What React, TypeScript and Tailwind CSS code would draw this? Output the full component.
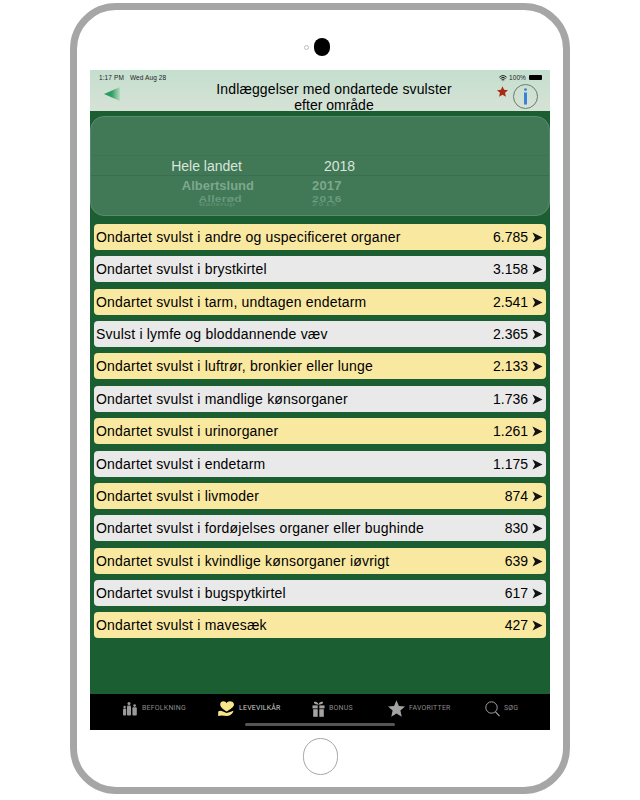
import { Wifi } from "lucide-react";

const rows = [
  ["Ondartet svulst i andre og uspecificeret organer", "6.785"],
  ["Ondartet svulst i brystkirtel", "3.158"],
  ["Ondartet svulst i tarm, undtagen endetarm", "2.541"],
  ["Svulst i lymfe og bloddannende væv", "2.365"],
  ["Ondartet svulst i luftrør, bronkier eller lunge", "2.133"],
  ["Ondartet svulst i mandlige kønsorganer", "1.736"],
  ["Ondartet svulst i urinorganer", "1.261"],
  ["Ondartet svulst i endetarm", "1.175"],
  ["Ondartet svulst i livmoder", "874"],
  ["Ondartet svulst i fordøjelses organer eller bughinde", "830"],
  ["Ondartet svulst i kvindlige kønsorganer iøvrigt", "639"],
  ["Ondartet svulst i bugspytkirtel", "617"],
  ["Ondartet svulst i mavesæk", "427"],
];

function Arrow() {
  return (
    <svg width="11" height="11" viewBox="0 0 11 11" className="shrink-0">
      <path d="M0.5 0.5 L10.5 5.5 L0.5 10.5 L3 5.5 Z" fill="#111" />
    </svg>
  );
}

function PeopleIcon() {
  return (
    <svg width="16" height="14" viewBox="0 0 16 14" fill="#9a9a9a">
      <circle cx="2.6" cy="5" r="1.2" />
      <rect x="1" y="6.5" width="3.2" height="7" rx="1" />
      <circle cx="7" cy="1.6" r="1.5" />
      <rect x="5" y="3.4" width="4" height="10" rx="1" />
      <circle cx="12.6" cy="3.6" r="1.3" />
      <rect x="10.4" y="5.2" width="4.4" height="8.4" rx="1" />
    </svg>
  );
}

function HeartHandIcon() {
  return (
    <svg width="17" height="16" viewBox="0 0 17 16" fill="#f7e68c">
      <path d="M8.6 10.5 C5 8 2.2 6 2.2 3.4 C2.2 1.4 3.8 0.3 5.4 0.3 C6.8 0.3 8 1 8.6 2.2 C9.3 1 10.5 0.3 11.9 0.3 C13.7 0.3 16 1.4 16 3.4 C16 6 12.4 8 8.6 10.5 Z" />
      <path d="M0.2 10.5 C1.8 9.5 3.4 9.6 5 10.6 L8.5 12 L12 11 L15.5 9.8 C14.8 12.5 12.5 15 9 15 L3.5 14.6 L0.2 15 Z" />
    </svg>
  );
}

function GiftIcon() {
  return (
    <svg width="13" height="16" viewBox="0 0 13 16" fill="#a3a3a3">
      <path d="M2 1 C4 0 6 1.5 6.3 3 L6.7 3 C7 1.5 9 0 11 1 C11.6 2.4 9.5 3.4 7.8 3.6 L5.2 3.6 C3.5 3.4 1.4 2.4 2 1 Z" />
      <rect x="0.5" y="4.4" width="5.2" height="3" />
      <rect x="7.3" y="4.4" width="5.2" height="3" />
      <rect x="1.2" y="8.2" width="4.5" height="7.6" />
      <rect x="7.3" y="8.2" width="4.5" height="7.6" />
    </svg>
  );
}

function StarIcon({ size, color }: { size: number; color: string }) {
  return (
    <svg width={size} height={size} viewBox="0 0 24 24" fill={color}>
      <path d="M12 0.5 L15.4 8.4 L24 9.2 L17.5 14.9 L19.4 23.5 L12 19 L4.6 23.5 L6.5 14.9 L0 9.2 L8.6 8.4 Z" />
    </svg>
  );
}

function SearchIcon() {
  return (
    <svg width="15" height="16" viewBox="0 0 15 16" fill="none" stroke="#a3a3a3" strokeWidth="1">
      <circle cx="6.5" cy="6.5" r="5.7" />
      <path d="M10.5 10.8 L14.5 15.2" strokeWidth="1.2" />
    </svg>
  );
}

function TabItem({ icon, label, active, w }: { icon: React.ReactNode; label: string; active?: boolean; w: string }) {
  return (
    <div className={`flex items-center gap-[4px] ${w}`}>
      {icon}
      <span className={`font-['Roboto',sans-serif] text-[7px] tracking-[0.2px] ${active ? "text-[#cfcfcf]" : "text-[#8a8a8a]"}`}>{label}</span>
    </div>
  );
}

export default function App() {
  return (
    <div className="h-[800px] w-[640px] overflow-hidden bg-white pl-[70px] pt-[3px] font-['Liberation_Sans',sans-serif]">
      <div className="flex h-[791px] w-[500px] flex-col items-center rounded-[46px] border-[7px] border-[#a6a6a6] bg-white">
        {/* camera */}
        <div className="flex h-[60px] w-full items-center justify-center gap-[5px] pr-[6px] pt-[14px]">
          <div className="h-[5px] w-[5px] rounded-full border border-[#bdbdbd]" />
          <div className="h-[18px] w-[16px] rounded-full bg-black" />
        </div>

        {/* screen */}
        <div className="flex h-[660px] w-[460px] flex-col bg-[#1a5e32]">
          <div className="relative h-[41px] shrink-0 bg-gradient-to-b from-[#c4dfcf] to-[#d6e2d6]">
            <div className="flex items-center justify-between pl-[9px] pr-[8px] pt-[3px] text-[6.5px] tracking-[0.1px] text-[#222]">
              <span className="flex gap-[6px]">
                <span>1:17 PM</span>
                <span>Wed Aug 28</span>
              </span>
              <span className="flex items-center gap-[2px]">
                <Wifi size={8} strokeWidth={3} />
                <span>100%</span>
                <span className="ml-[1px] block h-[5px] w-[13px] rounded-[1px] bg-black" />
              </span>
            </div>
            <div className="absolute left-[14px] top-[17px] h-[14px] w-[16px] bg-gradient-to-r from-[#249a5c] via-[#2f9f65] to-[#b4dcc2] [clip-path:polygon(0_50%,100%_0,100%_100%)]" />
            <div className="absolute left-[28px] right-0 top-[11px] text-center text-[14px] leading-[16px] text-black">
              <div className="tracking-[0.12px]">Indlæggelser med ondartede svulster</div>
              <div>efter område</div>
            </div>
            <div className="absolute left-[407px] top-[16px]">
              <StarIcon size={11} color="#a92a10" />
            </div>
            <div className="absolute left-[423px] top-[14px] flex h-[25px] w-[25px] items-center justify-center rounded-full border border-[#6b7a72]">
              <svg width="5" height="17" viewBox="0 0 5 17" fill="#3b82d6">
                <circle cx="2.5" cy="1.6" r="1.4" />
                <rect x="1" y="4.5" width="3" height="12" />
              </svg>
            </div>
          </div>

          <div className="flex-1 overflow-hidden px-[4px] pt-[5px]">
            {/* picker */}
            <div className="relative -mx-[4px] h-[100px] overflow-hidden rounded-[14px] border border-[#5c8a70] bg-[#417856]">
              <div className="absolute left-0 right-0 top-[38px] h-[21px] border-y border-b-[#3a6e4e] border-t-[#3e7452]" />
              <div className="relative flex pt-[41px] font-medium">
                <div className="flex w-[232px] flex-col items-end">
                  <div className="pr-[81px] text-[14px] leading-[17px] text-[#d9e5dd]">Hele landet</div>
                  <div className="pr-[69px] pt-[2px] text-[13px] font-bold leading-[17px] text-[#7fa78e]">Albertslund</div>
                  <div className="origin-top scale-y-75 pr-[81px] text-[12px] font-bold leading-[13px] tracking-[0.3px] text-[#6a9a7e]">Allerød</div>
                  <div className="-mt-[5px] origin-top scale-y-50 pr-[88px] text-[9px] font-bold leading-[10px] text-[#5a8e70]">Ballerup</div>
                </div>
                <div className="flex flex-col">
                  <div className="pl-[1px] text-[14px] leading-[17px] text-[#d9e5dd]">2018</div>
                  <div className="-ml-[11px] pt-[2px] text-[13px] font-bold leading-[17px] tracking-[0.2px] text-[#7fa78e]">2017</div>
                  <div className="-ml-[11px] origin-top scale-y-75 text-[12px] font-bold leading-[13px] tracking-[0.9px] text-[#6a9a7e]">2016</div>
                  <div className="-ml-[11px] -mt-[5px] origin-top scale-y-50 text-[9px] font-bold leading-[10px] tracking-[1.5px] text-[#5a8e70]">2015</div>
                </div>
              </div>
            </div>

            {/* list */}
            <div className="mt-[8px] flex flex-col gap-[6.37px]">
              {rows.map(([name, value], i) => (
                <div
                  key={name}
                  className={`flex h-[26px] items-center justify-between rounded-[4px] pl-[2px] pr-[3px] pt-[1px] text-[14px] text-black ${i % 2 === 0 ? "bg-[#f9e8a0]" : "bg-[#e9e9e9]"}`}
                >
                  <span className="tracking-[0.2px]">{name}</span>
                  <span className="flex items-center gap-[4px]">
                    {value}
                    <Arrow />
                  </span>
                </div>
              ))}
            </div>
          </div>

          {/* tab bar */}
          <div className="relative h-[36px] shrink-0 bg-black">
            <div className="flex items-center pl-[32px] pt-[6px]">
              <TabItem w="w-[96px]" icon={<PeopleIcon />} label="BEFOLKNING" />
              <TabItem w="w-[94px]" icon={<HeartHandIcon />} label="LEVEVILKÅR" active />
              <TabItem w="w-[76px]" icon={<GiftIcon />} label="BONUS" />
              <TabItem w="w-[97px]" icon={<StarIcon size={17} color="#a3a3a3" />} label="FAVORITTER" />
              <TabItem w="w-[40px]" icon={<SearchIcon />} label="SØG" />
            </div>
            <div className="absolute bottom-[4px] left-[155px] h-[3px] w-[150px] rounded-full bg-[#555]" />
          </div>
        </div>

        {/* home button */}
        <div className="flex flex-1 items-center justify-center pb-[4px]">
          <div className="h-[37px] w-[35px] rounded-full border-[1.5px] border-[#a6a6a6]" />
        </div>
      </div>
    </div>
  );
}
